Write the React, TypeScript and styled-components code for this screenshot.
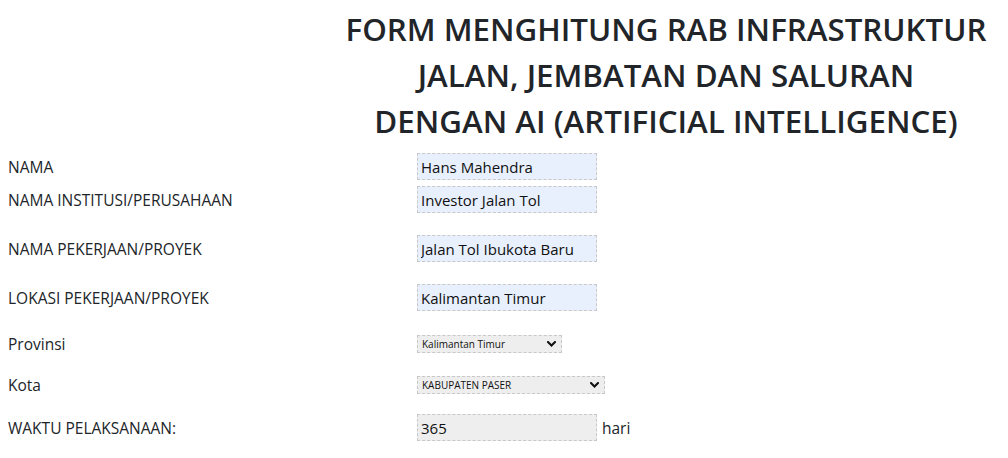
import React from "react";
import styled, { createGlobalStyle } from "styled-components";

const Global = createGlobalStyle`
  html, body { margin: 0; padding: 0; background: #fff; }
  body {
    margin: 8px;
    font-family: "Open Sans", "Noto Sans", sans-serif;
    color: #212529;
  }
`;

const Title = styled.h1`
  margin: -2px 0 0 0;
  padding: 0 0 0 324px;
  text-align: center;
  font-size: 31.3px;
  line-height: 46px;
  font-weight: 600;
  color: #212529;
`;

const Form = styled.div`
  display: flex;
  flex-direction: column;
  margin-top: 9px;
`;

const Row = styled.div<{ $top: number; $h: number }>`
  display: grid;
  grid-template-columns: 409px auto;
  align-items: center;
  margin-top: ${(p) => p.$top}px;
  height: ${(p) => p.$h}px;
`;

const Label = styled.label`
  font-size: 15.5px;
  color: #212529;
`;

const Field = styled.div`
  display: flex;
  align-items: center;
  gap: 5px;
`;

const TextInput = styled.input<{ $bg: string }>`
  box-sizing: border-box;
  width: 180px;
  height: 27px;
  padding: 0 3px;
  border: 1px dashed #c8c8c8;
  background: ${(p) => p.$bg};
  font-family: inherit;
  font-size: 15px;
  color: #111;
  outline: none;
`;

const SelectWrap = styled.div<{ $w: number }>`
  position: relative;
  width: ${(p) => p.$w}px;
  height: 18px;
`;

const Select = styled.select`
  display: block;
  box-sizing: border-box;
  appearance: none;
  -webkit-appearance: none;
  width: 100%;
  height: 100%;
  padding: 0 16px 0 4px;
  border: 1px dashed #c8c8c8;
  background: #eeeeee;
  font-family: inherit;
  font-size: 10px;
  color: #111;
  outline: none;
  border-radius: 0;
`;

const Chevron = styled.svg`
  position: absolute;
  right: 6px;
  top: 6px;
  width: 9px;
  height: 6px;
  pointer-events: none;
`;

const Unit = styled.span`
  font-size: 15.5px;
  color: #212529;
`;

function Dropdown({ w, value }: { w: number; value: string }) {
  return (
    <SelectWrap $w={w}>
      <Select defaultValue={value}>
        <option>{value}</option>
      </Select>
      <Chevron viewBox="0 0 9 6">
        <path d="M1 1 L4.5 4.5 L8 1" fill="none" stroke="#111" strokeWidth="2" strokeLinecap="square" />
      </Chevron>
    </SelectWrap>
  );
}

export default function App() {
  return (
    <>
      <Global />
      <Title>
        FORM MENGHITUNG RAB INFRASTRUKTUR
        <br />
        JALAN, JEMBATAN DAN SALURAN
        <br />
        DENGAN AI (ARTIFICIAL INTELLIGENCE)
      </Title>
      <Form>
        <Row $top={0} $h={27}>
          <Label>NAMA</Label>
          <Field>
            <TextInput $bg="#e8f0fe" defaultValue="Hans Mahendra" />
          </Field>
        </Row>
        <Row $top={6} $h={27}>
          <Label>NAMA INSTITUSI/PERUSAHAAN</Label>
          <Field>
            <TextInput $bg="#e8f0fe" defaultValue="Investor Jalan Tol" />
          </Field>
        </Row>
        <Row $top={22} $h={27}>
          <Label>NAMA PEKERJAAN/PROYEK</Label>
          <Field>
            <TextInput $bg="#e8f0fe" defaultValue="Jalan Tol Ibukota Baru" />
          </Field>
        </Row>
        <Row $top={22} $h={27}>
          <Label>LOKASI PEKERJAAN/PROYEK</Label>
          <Field>
            <TextInput $bg="#e8f0fe" defaultValue="Kalimantan Timur" />
          </Field>
        </Row>
        <Row $top={22} $h={18}>
          <Label>Provinsi</Label>
          <Field>
            <Dropdown w={145} value="Kalimantan Timur" />
          </Field>
        </Row>
        <Row $top={23} $h={18}>
          <Label>Kota</Label>
          <Field>
            <Dropdown w={188} value="KABUPATEN PASER" />
          </Field>
        </Row>
        <Row $top={22} $h={27}>
          <Label>WAKTU PELAKSANAAN:</Label>
          <Field>
            <TextInput $bg="#eeeeee" defaultValue="365" />
            <Unit>hari</Unit>
          </Field>
        </Row>
      </Form>
    </>
  );
}
